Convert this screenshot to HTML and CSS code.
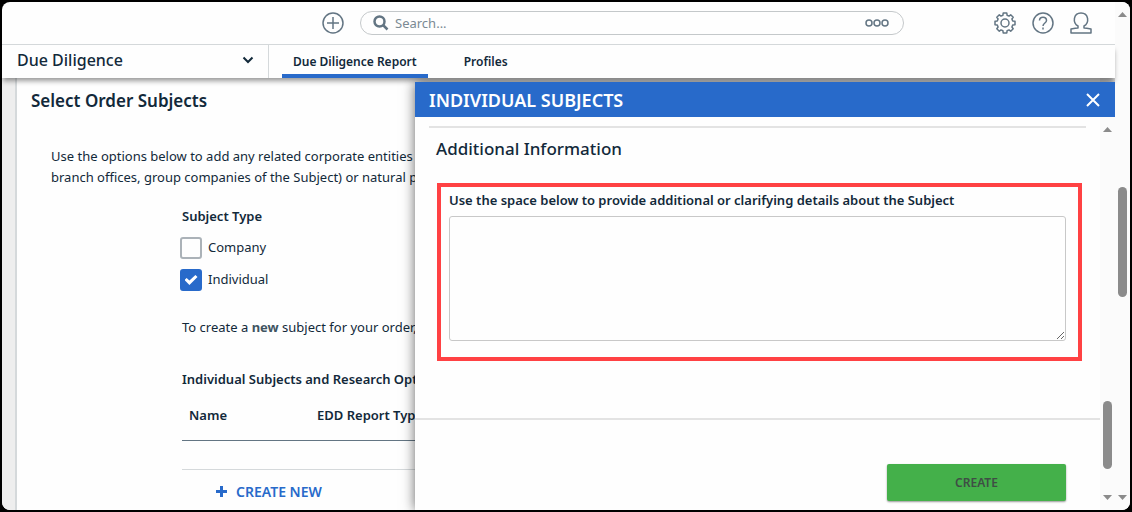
FILE: index.html
```html
<!DOCTYPE html>
<html lang="en">
<head>
    <meta charset="UTF-8">
    <meta name="viewport" content="width=device-width, initial-scale=1.0">
    <title>Due Diligence Report</title>
    <link rel="stylesheet" href="styles.css">
</head>
<body>

<div class="window">
    <div class="app">
        <header class="topbar">
            <button class="icon-btn" aria-label="Add">
                <svg width="22" height="22" viewBox="0 0 22 22"><circle cx="11" cy="11" r="10"/><path d="M11 5v12M5 11h12"/></svg>
            </button>
            <div class="search">
                <svg class="search-icon" width="16" height="16" viewBox="0 0 16 16"><circle cx="6.5" cy="6.5" r="5"/><path d="M10 10L14.5 14.5"/></svg>
                <input type="text" placeholder="Search..." aria-label="Search">
                <button class="icon-btn" aria-label="Search options">
                    <svg width="26" height="10" viewBox="0 0 26 10"><circle cx="5" cy="5" r="3"/><circle cx="13" cy="5" r="3"/><circle cx="21" cy="5" r="3"/></svg>
                </button>
            </div>
            <div class="tools">
                <button class="icon-btn" aria-label="Settings">
                    <svg width="22" height="22" viewBox="0 0 22 22"><circle cx="11" cy="11" r="4"/><path d="M21 9.200v3.600L18.700 13.100 17.900 15 19.200 16.700 16.700 19.200 15 17.900 13.100 18.700 12.800 21H9.200L8.900 18.700 7 17.900 5.300 19.200 2.800 16.700 4.100 15 3.300 13.100 1 12.800V9.200L3.300 8.900 4.100 7 2.800 5.300 5.300 2.800 7 4.100 8.900 3.300 9.200 1H12.800L13.100 3.300 15 4.100 16.700 2.800 19.200 5.300 17.900 7 18.700 8.900z" stroke-linejoin="round"/></svg>
                </button>
                <button class="icon-btn" aria-label="Help">
                    <svg width="22" height="22" viewBox="0 0 22 22"><circle cx="11" cy="11" r="10"/><path d="M7.500 8.500c0-4.500 7-4.500 7 0 0 2.500-3.500 2.500-3.500 5.500M11 15.500v2"/></svg>
                </button>
                <button class="icon-btn" aria-label="Account">
                    <svg width="22" height="22" viewBox="0 0 22 22"><path d="M1 21v-4c2.500-.5 5-1 7-1v-2C2.500 11 3 1 11 1s8.500 10 3 13v2c2 0 4.500.5 7 1v4z" stroke-linejoin="round"/></svg>
                </button>
            </div>
        </header>

        <nav class="navbar">
            <button class="module">
                Due Diligence
                <svg width="12" height="8" viewBox="0 0 12 8"><path d="M1.500 1.500L6 6l4.500-4.500"/></svg>
            </button>
            <a class="tab active" href="#report">Due Diligence Report</a>
            <a class="tab" href="#profiles">Profiles</a>
        </nav>

        <div class="workspace">
            <main class="report">
                <h1>Select Order Subjects</h1>
                <p class="intro">Use the options below to add any related corporate entities (e.g.<br>branch offices, group companies of the Subject) or natural persons.</p>
                <section class="subjects">
                    <fieldset>
                        <legend>Subject Type</legend>
                        <label class="check"><input type="checkbox"> Company</label>
                        <label class="check"><input type="checkbox" checked> Individual</label>
                    </fieldset>
                    <p class="hint">To create a <b>new</b> subject for your order, click Create New.</p>
                    <h2>Individual Subjects and Research Options</h2>
                    <table>
                        <thead>
                            <tr><th class="name">Name</th><th>EDD Report Type</th></tr>
                        </thead>
                        <tbody>
                            <tr><td></td><td></td></tr>
                        </tbody>
                    </table>
                    <button class="create-new">
                        <svg width="11" height="11" viewBox="0 0 11 11"><path d="M5.500 0v11M0 5.500h11"/></svg>
                        CREATE NEW
                    </button>
                </section>
            </main>

            <aside class="drawer">
                <div class="drawer-head">
                    <h2>INDIVIDUAL SUBJECTS</h2>
                    <button class="close" aria-label="Close">
                        <svg width="14" height="14" viewBox="0 0 14 14"><path d="M1 1l12 12M13 1L1 13"/></svg>
                    </button>
                </div>
                <div class="drawer-body">
                    <form class="drawer-form">
                        <div class="details">
                            <h3>Additional Information</h3>
                            <div class="highlight">
                                <label for="info">Use the space below to provide additional or clarifying details about the Subject</label>
                                <textarea id="info"></textarea>
                            </div>
                        </div>
                        <div class="actions">
                            <button type="button" class="create">CREATE</button>
                        </div>
                    </form>
                    <div class="scrollbar inner">
                        <span class="arrow up"></span>
                        <div class="track"><span class="thumb"></span></div>
                        <span class="arrow down"></span>
                    </div>
                </div>
            </aside>
        </div>
    </div>

    <div class="scrollbar outer">
        <span class="arrow up"></span>
        <div class="track"><span class="thumb"></span></div>
        <span class="arrow down"></span>
    </div>
</div>

</body>
</html>
```

FILE: styles.css
```css
* {
    box-sizing: border-box;
}
body {
    margin: 0;
    padding: 2px;
    height: 100vh;
    background: #000;
    color: #12293a;
    font-family: "Noto Sans", sans-serif;
    font-size: 13px;
    line-height: 20px;
}
h1, h2, h3, p {
    margin: 0;
}
button {
    border: 0;
    padding: 0;
    background: none;
    color: inherit;
    font-family: inherit;
    cursor: pointer;
}
svg {
    display: block;
    fill: none;
    stroke: currentColor;
}
.window {
    display: flex;
    height: 100%;
    background: #fefefe;
    border-radius: 8px;
    overflow: hidden;
}
.app {
    flex: 1;
    min-width: 0;
    display: flex;
    flex-direction: column;
}

/* top bar */
.topbar {
    display: flex;
    align-items: center;
    gap: 16px;
    height: 43px;
    padding: 0 23px 0 320px;
    border-bottom: 1px solid #d5d9db;
    color: #637583;
}
.icon-btn svg {
    stroke-width: 1.5;
}
.search {
    flex: 0 1 544px;
    display: flex;
    align-items: center;
    gap: 6px;
    height: 24px;
    padding: 0 13px 0 12px;
    border: 1px solid #c4c8ca;
    border-radius: 12px;
}
.search-icon {
    stroke-width: 2.5;
}
.search input {
    flex: 1;
    min-width: 0;
    padding: 0;
    border: 0;
    outline: 0;
    background: none;
    font: inherit;
}
.search input::placeholder {
    color: #7b8a94;
}
.tools {
    display: flex;
    gap: 16px;
    margin-left: auto;
}

/* navigation */
.navbar {
    position: relative;
    z-index: 3;
    display: flex;
    height: 33px;
    background: #fefefe;
    box-shadow: 0 4px 5px -1px rgba(0, 0, 0, 0.4);
}
.module {
    display: flex;
    align-items: center;
    justify-content: space-between;
    width: 267px;
    margin-right: 13px;
    padding: 0 14px 3px 15px;
    border-right: 1px solid #d5d9db;
    font-size: 16px;
    font-weight: 500;
}
.module svg {
    stroke-width: 2;
}
.tab {
    display: flex;
    align-items: center;
    margin-right: 25px;
    padding: 4px 11px 0;
    border-bottom: 4px solid transparent;
    color: inherit;
    font-size: 12px;
    font-weight: 600;
    text-decoration: none;
}
.tab.active {
    border-color: #286aca;
}

/* report page */
.workspace {
    position: relative;
    flex: 1;
    min-height: 0;
    padding: 0 15px 0 13px;
    background: #eee;
    overflow: hidden;
}
.report {
    min-height: 100%;
    padding: 12px 14px 0;
    border-left: 2px solid #d5d9db;
    background: #fefefe;
}
.report h1 {
    font-size: 17px;
    font-weight: 600;
    line-height: 22px;
}
.intro {
    margin: 34px 0 18px 20px;
    line-height: 21px;
}
.subjects {
    margin-left: 151px;
}
fieldset {
    display: flex;
    flex-direction: column;
    gap: 10px;
    margin: 0;
    padding: 0;
    border: 0;
}
legend {
    padding: 0 0 11px;
    font-weight: 600;
}
.check {
    display: flex;
    gap: 6px;
    align-items: flex-start;
    margin-left: -2px;
}
.check input {
    appearance: none;
    display: grid;
    place-items: center;
    width: 22px;
    height: 22px;
    margin: 0;
    border: 2px solid #abb2b8;
    border-radius: 3px;
}
.check input:checked {
    border-color: #286aca;
    background: #286aca;
}
.check input:checked::before {
    content: "";
    width: 13px;
    height: 10px;
    background: #fff;
    clip-path: polygon(0 50%, 16% 30%, 38% 54%, 84% 0, 100% 20%, 38% 100%);
}
.hint {
    margin: 26px 0 32px;
}
.hint b {
    color: #405462;
    font-weight: 700;
}
.subjects h2 {
    font-size: 13px;
    font-weight: 600;
    line-height: 20px;
}
table {
    width: 100%;
    border-collapse: collapse;
}
th {
    height: 51px;
    padding: 2px 7px 0;
    border-bottom: 1px solid #637583;
    font-weight: 600;
    text-align: left;
}
.name {
    width: 128px;
}
td {
    height: 29px;
    border-bottom: 1px solid #d5d9db;
}
.create-new {
    display: flex;
    align-items: center;
    gap: 9px;
    margin: 12px 0 0 34px;
    color: #286aca;
    font-size: 14px;
    font-weight: 600;
    line-height: 20px;
}
.create-new svg {
    stroke-width: 3;
}

/* drawer over the report */
.drawer {
    position: absolute;
    top: 4px;
    right: 0;
    bottom: 0;
    display: flex;
    flex-direction: column;
    width: 700px;
    max-width: 100%;
    background: #fefefe;
    box-shadow: 0 0 12px rgba(0, 0, 0, 0.6);
    z-index: 4;
}
.drawer-head {
    display: flex;
    align-items: center;
    justify-content: space-between;
    height: 35px;
    padding: 0 15px 0 14px;
    background: #286aca;
    color: #fff;
}
.drawer-head h2 {
    font-size: 18px;
    font-weight: 600;
}
.close svg {
    stroke-width: 2;
}
.drawer-body {
    flex: 1;
    display: flex;
    min-height: 0;
}
.drawer-form {
    flex: 1;
    display: flex;
    flex-direction: column;
}
.details {
    flex: 1;
    margin: 9px 14px 0;
    border-top: 2px solid #e3e3e3;
}
.details h3 {
    margin: 10px 7px 23px;
    font-size: 17px;
    font-weight: 500;
    line-height: 22px;
}
.highlight {
    margin: 0 4px 0 8px;
    padding: 3px 12px 16px 8px;
    border: 4px solid #ff4143;
}
.highlight label {
    display: block;
    margin-bottom: 6px;
    font-weight: 600;
}
textarea {
    display: block;
    width: 100%;
    height: 125px;
    border: 1px solid #c8c8c8;
    border-radius: 3px;
    background: #fefefe;
    font: inherit;
    resize: vertical;
}
.actions {
    display: flex;
    justify-content: flex-end;
    height: 92px;
    padding: 44px 34px 0 0;
    border-top: 2px solid #e3e3e3;
}
.create {
    width: 179px;
    height: 37px;
    border-radius: 2px;
    background: #44b04a;
    box-shadow: 0 1px 2px rgba(0, 0, 0, 0.4);
    color: #3f4d45;
    font-size: 12px;
    font-weight: 600;
}

/* scrollbars */
.scrollbar {
    display: flex;
    flex-direction: column;
    align-items: center;
    width: 15px;
    padding: 10px 0;
    background: #fbfbfb;
}
.arrow {
    width: 9px;
    height: 5px;
    background: #8b8b8b;
}
.up {
    clip-path: polygon(50% 0, 100% 100%, 0 100%);
}
.down {
    clip-path: polygon(0 0, 100% 0, 50% 100%);
}
.track {
    flex: 1;
    display: flex;
    flex-direction: column;
}
.track::before,
.track::after {
    content: "";
    flex: 170;
}
.track::after {
    flex-grow: 198;
}
.thumb {
    flex: 110;
    width: 9px;
    border-radius: 5px;
    background: #8b8b8b;
}
.inner .track::before {
    flex-grow: 269;
}
.inner .thumb {
    flex-grow: 68;
}
.inner .track::after {
    flex-grow: 26;
}
```
